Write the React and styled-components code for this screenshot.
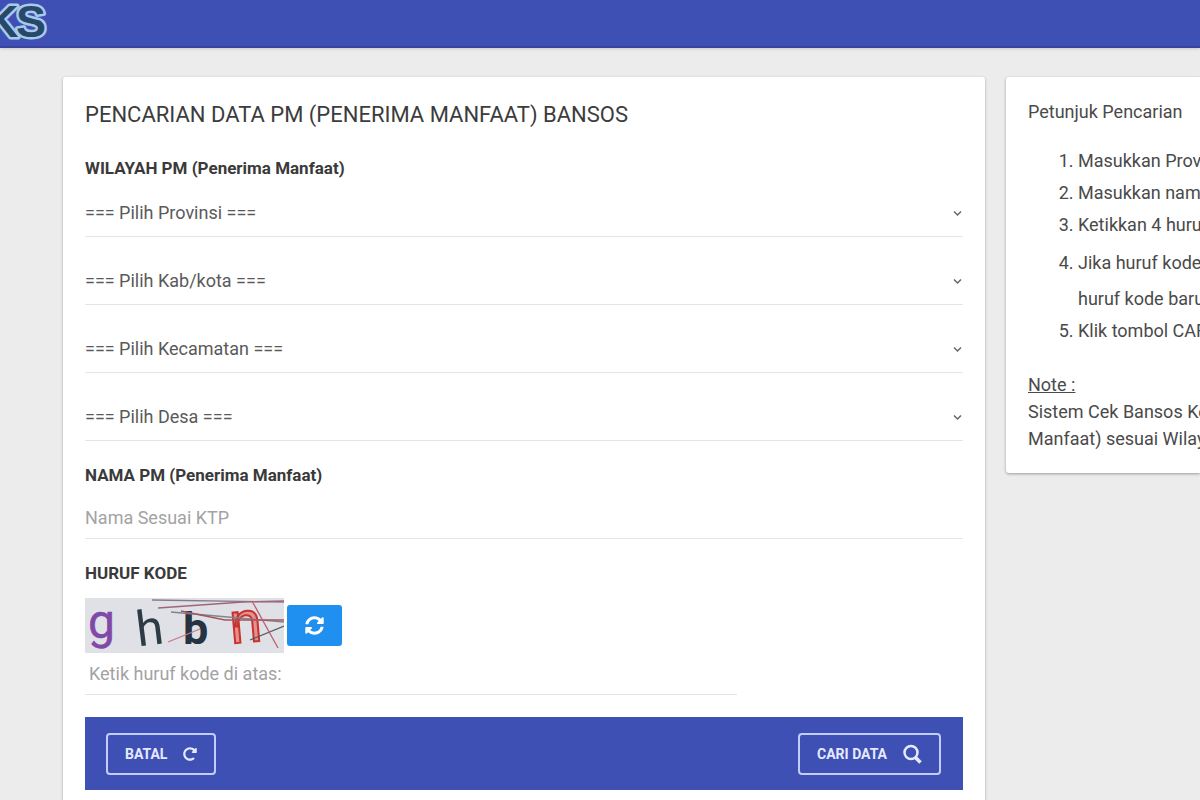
import React, { useState } from 'react';
import styled, { createGlobalStyle } from 'styled-components';
import { FaSyncAlt, FaRedoAlt } from 'react-icons/fa';

const GlobalStyle = createGlobalStyle`
  * {
    box-sizing: border-box;
  }
  body {
    margin: 0;
    background: #ececed;
    color: #4a4a4a;
    font-family: Roboto, 'Liberation Sans', sans-serif;
    font-size: 18px;
  }
  html {
    scrollbar-width: none;
  }
`;

const Header = styled.header`
  height: 48px;
  background: #3f50b5;
  border-bottom: 2px solid #3a449f;
  box-shadow: 0 1px 3px rgba(0, 0, 0, 0.15);
`;

const Logo = styled.svg`
  display: block;
  width: 56px;
  height: 46px;
`;

const Layout = styled.main`
  display: grid;
  grid-template-columns: minmax(0, 1fr) 194px;
  gap: 21px;
  align-items: start;
  padding: 29px 0 0 63px;
`;

const Card = styled.section`
  background: #fff;
  border-radius: 3px;
  padding: 22px;
  box-shadow: 0 1px 3px rgba(0, 0, 0, 0.3);
`;

const Title = styled.h1`
  margin: 0 0 25px;
  font-size: 22px;
  font-weight: 400;
  line-height: 32px;
  color: #3c3c3c;
`;

const SectionTitle = styled.h2`
  margin: 0;
  font-size: 17px;
  font-weight: 700;
  line-height: 24px;
  color: #3a3a3a;
`;

const SelectList = styled.div`
  display: flex;
  flex-direction: column;
  gap: 20px;
  padding: 9px 0 22px;
`;

const SelectBox = styled.div`
  position: relative;
`;

const Select = styled.select`
  display: block;
  width: 100%;
  height: 48px;
  padding: 0;
  border: none;
  border-bottom: 1px solid #e4e4e4;
  border-radius: 0;
  background: transparent;
  appearance: none;
  color: #5a5a5a;
  font: inherit;
  outline: none;
`;

const Chevron = styled.svg`
  position: absolute;
  right: 0;
  top: 20px;
  width: 11px;
  height: 8px;
  pointer-events: none;
`;

const Input = styled.input`
  display: block;
  width: ${(props) => (props.$short ? '652px' : '100%')};
  max-width: 100%;
  height: 42px;
  padding: ${(props) => (props.$short ? '0 4px' : '0')};
  border: none;
  border-bottom: 1px solid #e4e4e4;
  background: transparent;
  color: #444;
  font: inherit;
  outline: none;
  &::placeholder {
    color: #a3a3a3;
    opacity: 1;
  }
`;

const NameField = styled.div`
  padding: 10px 0 22px;
`;

const CaptchaRow = styled.div`
  display: flex;
  align-items: center;
  gap: 3px;
  margin-top: 13px;
`;

const CaptchaImage = styled.svg`
  display: block;
  width: 199px;
  height: 55px;
  background: #dfe1e6;
`;

const RefreshButton = styled.button`
  display: flex;
  align-items: center;
  justify-content: center;
  width: 55px;
  height: 41px;
  padding: 0;
  border: none;
  border-radius: 3px;
  background: #2090f0;
  color: #fff;
  font-size: 19px;
  cursor: pointer;
`;

const ActionBar = styled.div`
  display: flex;
  justify-content: space-between;
  align-items: center;
  margin-top: 22px;
  padding: 16px 22px 15px 21px;
  background: #3f50b5;
`;

const ActionButton = styled.button`
  display: flex;
  align-items: center;
  gap: 16px;
  height: 42px;
  padding: 0 17px;
  border: 2px solid #c3cdfb;
  border-radius: 4px;
  background: transparent;
  color: #e4eaff;
  font-family: inherit;
  font-size: 14px;
  font-weight: 700;
  cursor: pointer;
`;

const Guide = styled.aside`
  height: 396px;
  padding: 22px 0 0 22px;
  overflow: hidden;
  background: #fff;
  border-radius: 3px 0 0 3px;
  box-shadow: 0 1px 3px rgba(0, 0, 0, 0.35);
  white-space: nowrap;
`;

const GuideTitle = styled.h2`
  margin: 0;
  font-size: 18px;
  font-weight: 400;
  line-height: 26px;
`;

const Steps = styled.ol`
  margin: 20px 0 24px;
  padding-left: 50px;
  line-height: 32px;
`;

const TallStep = styled.li`
  margin: 4px 0 -2px;
  line-height: 36px;
`;

const Note = styled.p`
  margin: 0;
  line-height: 27px;
`;

const regions = [
  { name: 'provinsi', label: 'Provinsi' },
  { name: 'kabupaten', label: 'Kab/kota' },
  { name: 'kecamatan', label: 'Kecamatan' },
  { name: 'desa', label: 'Desa' }
];

function App() {
  const [formData, setFormData] = useState({ nama: '', kode: '' });

  const handleChange = (e) => {
    const { name, value } = e.target;
    setFormData(prev => ({
      ...prev,
      [name]: value
    }));
  };

  const handleSubmit = (e) => {
    e.preventDefault();
  };

  return (
    <>
      <GlobalStyle />
      <Header>
        <Logo viewBox="0 0 56 46" aria-label="Logo">
          <g
            fontFamily="Liberation Sans, sans-serif"
            fontSize="45"
            fontWeight="700"
            fill="#26496a"
            stroke="#a9c9ec"
            strokeWidth="5"
            strokeLinejoin="round"
            paintOrder="stroke"
          >
            <text x="-14" y="37">K</text>
            <text x="16" y="37">S</text>
          </g>
        </Logo>
      </Header>
      <Layout>
        <Card>
          <Title>PENCARIAN DATA PM (PENERIMA MANFAAT) BANSOS</Title>
          <form onSubmit={handleSubmit}>
            <SectionTitle>WILAYAH PM (Penerima Manfaat)</SectionTitle>
            <SelectList>
              {regions.map((region) => (
                <SelectBox key={region.name}>
                  <Select name={region.name} aria-label={region.label}>
                    <option>=== Pilih {region.label} ===</option>
                  </Select>
                  <Chevron viewBox="0 0 11 8" fill="none" stroke="#666" strokeWidth="1.5">
                    <path d="M2 2.5 L5.5 6 L9 2.5" />
                  </Chevron>
                </SelectBox>
              ))}
            </SelectList>

            <SectionTitle as="label" htmlFor="nama">NAMA PM (Penerima Manfaat)</SectionTitle>
            <NameField>
              <Input
                type="text"
                id="nama"
                name="nama"
                placeholder="Nama Sesuai KTP"
                value={formData.nama}
                onChange={handleChange}
              />
            </NameField>

            <SectionTitle as="label" htmlFor="kode">HURUF KODE</SectionTitle>
            <CaptchaRow>
              <CaptchaImage viewBox="0 0 199 55" fontFamily="Roboto, sans-serif">
                <text x="3" y="40" fontSize="48" fill="#8148a8" stroke="#8148a8" strokeWidth="0.5">g</text>
                <text x="51" y="47" fontSize="49" fill="#2d3b47" transform="rotate(-7 64 30)">h</text>
                <text x="98" y="46" fontSize="45" fontWeight="700" fill="#263442">b</text>
                <text x="145" y="44" fontSize="58" fill="#e5908d" stroke="#c8322f" strokeWidth="2" transform="rotate(-5 163 30)">n</text>
                <g fill="none" strokeWidth="1.3">
                  <path d="M67 2 L199 4" stroke="#857c8b" />
                  <path d="M73 10 L158 4 L199 3" stroke="#a1657a" />
                  <path d="M86 14 L199 24" stroke="#80858a" />
                  <path d="M96 13 L140 22 L199 22" stroke="#a4555c" />
                  <path d="M83 44 L115 31" stroke="#c5798b" />
                  <path d="M165 42 L199 28" stroke="#555b63" />
                  <path d="M167 3 L193 50" stroke="#bd5f6d" />
                </g>
              </CaptchaImage>
              <RefreshButton type="button" aria-label="Refresh">
                <FaSyncAlt />
              </RefreshButton>
            </CaptchaRow>
            <Input
              $short
              type="text"
              id="kode"
              name="kode"
              placeholder="Ketik huruf kode di atas:"
              value={formData.kode}
              onChange={handleChange}
            />

            <ActionBar>
              <ActionButton type="reset">
                BATAL
                <FaRedoAlt size={14} />
              </ActionButton>
              <ActionButton type="submit">
                CARI DATA
                <svg width="19" height="20" viewBox="0 0 19 20" fill="none" stroke="currentColor">
                  <circle cx="8" cy="8.5" r="6.5" strokeWidth="2.5" />
                  <path d="M12.5 13.5 L17.5 18.5" strokeWidth="3.5" />
                </svg>
              </ActionButton>
            </ActionBar>
          </form>
        </Card>

        <Guide>
          <GuideTitle>Petunjuk Pencarian</GuideTitle>
          <Steps>
            <li>Masukkan Provinsi</li>
            <li>Masukkan nama PM</li>
            <li>Ketikkan 4 huruf kode</li>
            <TallStep>
              Jika huruf kode kurang
              <br />
              huruf kode baru
            </TallStep>
            <li>Klik tombol CARI DATA</li>
          </Steps>
          <Note><u>Note :</u></Note>
          <Note>
            Sistem Cek Bansos Kemensos
            <br />
            Manfaat) sesuai Wilayah
          </Note>
        </Guide>
      </Layout>
    </>
  );
}

export default App;
